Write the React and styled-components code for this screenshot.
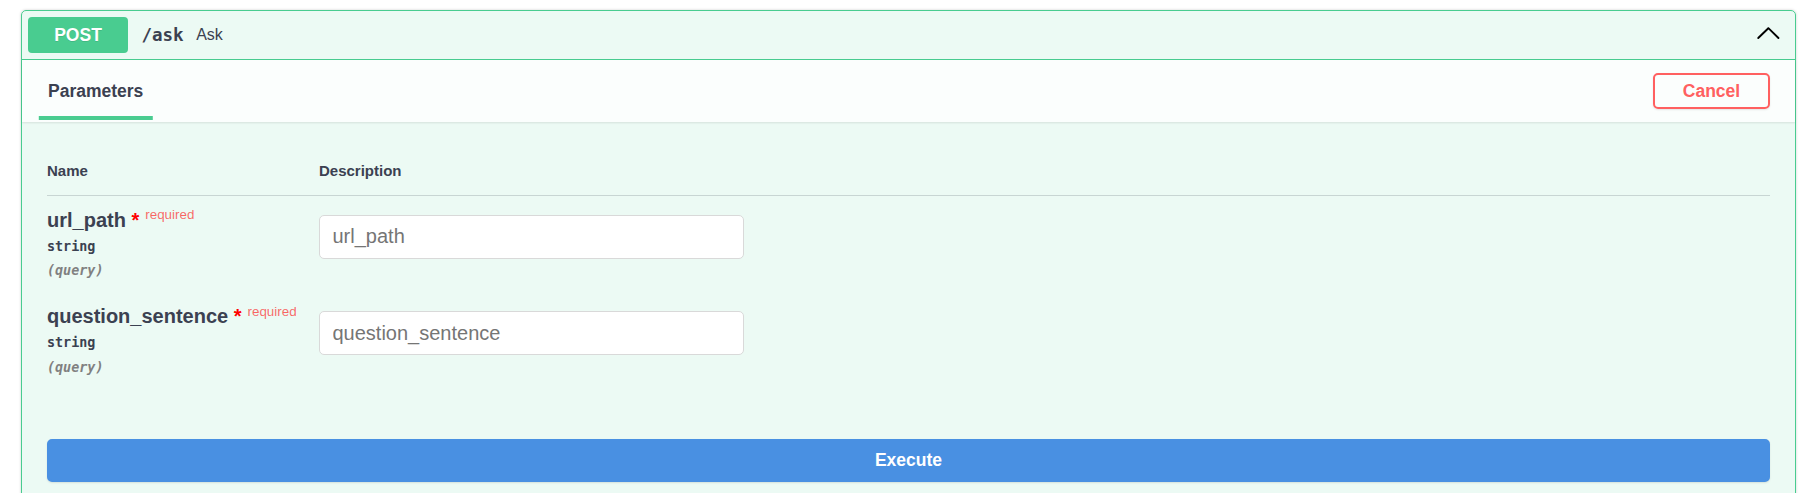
import React from "react";
import styled, { createGlobalStyle } from "styled-components";

const GlobalStyle = createGlobalStyle`
  body {
    margin: 0;
    background: #fff;
    font-family: "Liberation Sans", Arial, sans-serif;
    color: #3b4151;
  }
`;

const Page = styled.div`
  padding: 10px 19px 0 21px;
`;

const Block = styled.div`
  border: 1px solid #49cc90;
  border-radius: 5px;
  background: rgba(73, 204, 144, 0.1);
  box-shadow: 0 0 3px rgba(0, 0, 0, 0.19);
`;

const Summary = styled.div`
  display: flex;
  align-items: center;
  padding: 6px;
  border-bottom: 1px solid #49cc90;
`;

const Method = styled.span`
  width: 100px;
  height: 36px;
  display: flex;
  align-items: center;
  justify-content: center;
  border-radius: 4px;
  background: #49cc90;
  color: #fff;
  font-size: 17.5px;
  font-weight: 700;
  text-shadow: 0 1px 0 rgba(0, 0, 0, 0.1);
`;

const Path = styled.span`
  padding: 0 12.5px 0 13.5px;
  font-family: "DejaVu Sans Mono", "Liberation Mono", monospace;
  font-size: 17.5px;
  font-weight: 700;
  color: #3b4151;
`;

const Description = styled.span`
  flex: 1;
  font-size: 16px;
  color: #3b4151;
`;

const Toggle = styled.button`
  border: none;
  background: none;
  padding: 0;
  margin: 0 8px 5px 0;
  width: 25px;
  height: 25px;
  display: flex;
  cursor: pointer;
`;

const SectionHeader = styled.div`
  display: flex;
  align-items: center;
  justify-content: space-between;
  min-height: 62px;
  padding: 0 25px 0 26px;
  background: rgba(255, 255, 255, 0.8);
  box-shadow: 0 1px 2px rgba(0, 0, 0, 0.1);
`;

const TabTitle = styled.h4`
  margin: 0;
  font-size: 17.5px;
  font-weight: 700;
  color: #3b4151;

  span {
    position: relative;
  }

  span::after {
    content: "";
    position: absolute;
    left: 50%;
    bottom: -19px;
    width: 120%;
    height: 4px;
    transform: translateX(-50%);
    background: #49cc90;
  }
`;

const Button = styled.button`
  box-sizing: border-box;
  height: ${(p) => p.$height || 36}px;
  width: ${(p) => (p.$full ? "100%" : "117px")};
  border: 2px solid ${(p) => p.$color};
  border-radius: 5px;
  background: ${(p) => (p.$filled ? p.$color : "transparent")};
  color: ${(p) => (p.$filled ? "#fff" : p.$color)};
  font-family: "Liberation Sans", Arial, sans-serif;
  font-size: 17.5px;
  font-weight: 700;
  box-shadow: 0 1px 2px rgba(0, 0, 0, 0.1);
  cursor: pointer;
`;

const ParamsWrap = styled.div`
  padding: 25px;
`;

const Row = styled.div`
  display: flex;
  align-items: flex-start;
  padding: ${(p) => (p.$head ? "15px 0" : "12.5px 0")};
  border-bottom: ${(p) => (p.$head ? "1px solid rgba(59, 65, 81, 0.2)" : "none")};
`;

const NameCol = styled.div`
  width: 272px;
  flex-shrink: 0;
`;

const DescCol = styled.div`
  flex: 1;
`;

const HeadText = styled.span`
  font-size: 15px;
  font-weight: 700;
  color: #3b4151;
`;

const ParamName = styled.div`
  font-size: 20px;
  font-weight: 700;
  color: #3b4151;

  .star {
    color: red;
  }

  &::after {
    content: "required";
    position: relative;
    top: -7.5px;
    padding: 6px;
    font-size: 13.4px;
    font-weight: 400;
    color: rgba(255, 0, 0, 0.6);
  }
`;

const ParamMeta = styled.div`
  padding: ${(p) => (p.$italic ? "0" : "6.25px 0")};
  font-family: "DejaVu Sans Mono", "Liberation Mono", monospace;
  font-size: 13.4px;
  font-weight: 700;
  font-style: ${(p) => (p.$italic ? "italic" : "normal")};
  color: ${(p) => (p.$italic ? "gray" : "#3b4151")};
  line-height: 18px;
`;

const TextInput = styled.input`
  box-sizing: border-box;
  width: 425px;
  height: 44px;
  margin: 6px 0 0;
  padding: 0 12.5px;
  border: 1px solid #d9d9d9;
  border-radius: 5px;
  background: #fff;
  font-family: "Liberation Sans", Arial, sans-serif;
  font-size: 20px;
  color: #3b4151;
  outline: none;

  &::placeholder {
    color: #757575;
  }
`;

const ExecuteWrap = styled.div`
  padding: 25px;
`;

function ChevronUp() {
  return (
    <svg width="25" height="25" viewBox="0 0 20 20" aria-hidden="true">
      <path
        fill="#000"
        d="M17.418 14.908c.3.29.79.29 1.09 0 .3-.29.3-.76 0-1.05l-8.09-7.91c-.3-.29-.79-.29-1.09 0l-8.09 7.91c-.3.29-.3.76 0 1.05.3.29.79.29 1.09 0L10 7.618l7.418 7.29z"
      />
    </svg>
  );
}

const params = [
  { name: "url_path", type: "string", where: "query" },
  { name: "question_sentence", type: "string", where: "query" },
];

export default function App() {
  return (
    <Page>
      <GlobalStyle />
      <Block>
        <Summary>
          <Method>POST</Method>
          <Path>/ask</Path>
          <Description>Ask</Description>
          <Toggle aria-label="collapse">
            <ChevronUp />
          </Toggle>
        </Summary>

        <SectionHeader>
          <TabTitle>
            <span>Parameters</span>
          </TabTitle>
          <Button $color="#ff6060">Cancel</Button>
        </SectionHeader>

        <ParamsWrap>
          <Row $head>
            <NameCol>
              <HeadText>Name</HeadText>
            </NameCol>
            <DescCol>
              <HeadText>Description</HeadText>
            </DescCol>
          </Row>
          {params.map((p) => (
            <Row key={p.name}>
              <NameCol>
                <ParamName>
                  {p.name}
                  <span className="star">&nbsp;*</span>
                </ParamName>
                <ParamMeta>{p.type}</ParamMeta>
                <ParamMeta $italic>({p.where})</ParamMeta>
              </NameCol>
              <DescCol>
                <TextInput type="text" placeholder={p.name} />
              </DescCol>
            </Row>
          ))}
        </ParamsWrap>

        <ExecuteWrap>
          <Button $full $filled $color="#4990e2" $height={43}>
            Execute
          </Button>
        </ExecuteWrap>
      </Block>
    </Page>
  );
}
